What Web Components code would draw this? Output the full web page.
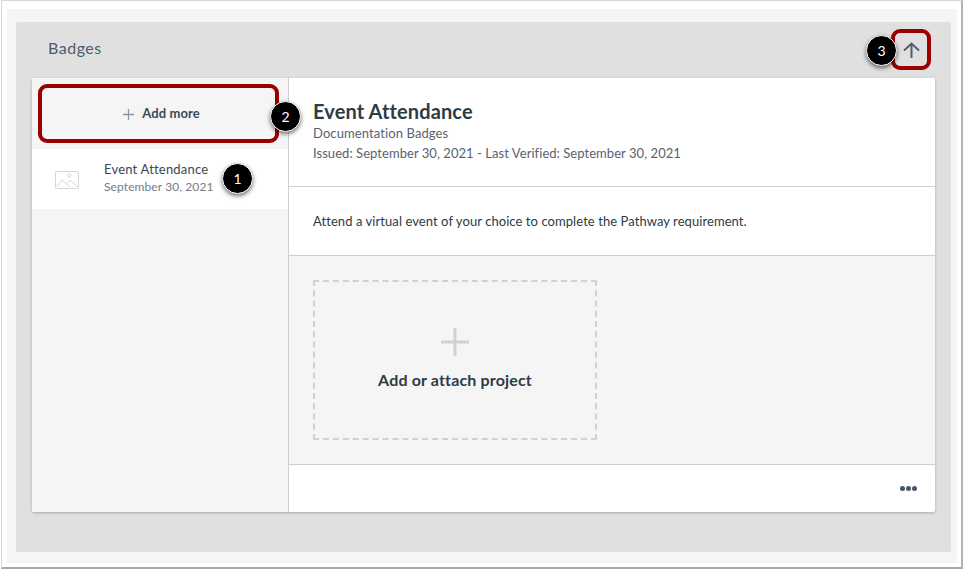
<!DOCTYPE html>
<html><head><meta charset="utf-8">
<style>
html,body{margin:0;padding:0;background:#fff;width:964px;height:571px;overflow:hidden}
body{font-family:"Lato","Liberation Sans",sans-serif}
</style></head><body>
<screenshot-frame>
  <badges-panel>
    <span slot="title">Badges</span>
    <badge-sidebar slot="side"></badge-sidebar>
    <badge-detail slot="main"></badge-detail>
  </badges-panel>
</screenshot-frame>
<script>
function def(name,html){customElements.define(name,class extends HTMLElement{
  constructor(){super();this.attachShadow({mode:'open'}).innerHTML=html}
})}
def('screenshot-frame',`<style>
:host{display:block;box-sizing:border-box;width:962px;height:569px;margin:0 0 0 1px;background:#fff;border:1px solid #d8d8d8;border-bottom:2px solid #a8a8a8;border-right:2px solid #b4b4b4;padding:8px 4px 4px 5px}
.in{box-sizing:border-box;height:100%;background:#f5f5f5;padding:13px 6px 11px 9px;display:flex}
</style><div class="in"><slot></slot></div>`);
def('call-out',`<style>
:host{position:absolute;width:31px;height:31px;border-radius:50%;background:#000;color:#fff;border:1px solid #fff;box-sizing:border-box;box-shadow:0 2px 4px rgba(0,0,0,.55);display:flex;align-items:center;justify-content:center;font:14px "Lato","Liberation Sans",sans-serif}
</style><slot></slot>`);
def('badges-panel',`<style>
:host{display:flex;flex-direction:column;flex:1;background:#e0e0e0;border-radius:2px;padding:0 16px 40px 16px;position:relative;min-width:0}
header{height:56px;display:flex;align-items:center;justify-content:space-between;padding:0 4px 0 16px;color:#4c5c6b;font-size:16px;letter-spacing:.5px;flex:none}
.t{margin-top:-5px}
.up{box-sizing:border-box;width:40px;height:41px;border:4px solid #990000;border-radius:9px;display:flex;align-items:center;justify-content:center;margin-top:-1px}
.card{flex:1;background:#fff;border-radius:2px;box-shadow:0 1px 3px rgba(0,0,0,.25);display:flex;min-height:0}
call-out{left:850px;top:13px}
</style>
<header><span class="t"><slot name="title"></slot></span><div class="up"><svg width="17" height="16" viewBox="0 0 17 16" fill="none" stroke="#4a5f73" stroke-width="2"><path d="M8.500 16V1.500M1 8.500l7.500-7 7.500 7"/></svg></div></header>
<div class="card"><slot name="side"></slot><slot name="main"></slot></div>
<call-out>3</call-out>`);
def('badge-sidebar',`<style>
:host{display:block;width:257px;box-sizing:border-box;flex:none;background:#f5f5f5;border-right:1px solid #c9d0d6;position:relative}
.addwrap{height:71px;box-sizing:border-box;padding:6px 9px 6px 6px}
.add{box-sizing:border-box;height:59px;border:4px solid #990000;border-radius:9px;display:flex;align-items:center;justify-content:center;gap:8px;font-size:13px;font-weight:700;letter-spacing:.1px;color:#3a4a58;background:#f5f5f5;padding-left:6px}
.add span{margin-top:-1px}
.item{height:60px;background:#fff;display:flex;align-items:center;padding-left:23px;box-sizing:border-box}
.item svg{margin-top:2px;flex:none}
.t{margin-left:25px;color:#3b4650;font-size:13px;line-height:17px;letter-spacing:.2px;margin-top:-3px}
.d{color:#757c83;font-size:12px;line-height:17px;letter-spacing:.1px}
</style>
<div class="addwrap"><div class="add"><svg width="11" height="11" viewBox="0 0 11 11" stroke="#8a97a3" stroke-width="1.3" style="margin-top:2px"><path d="M5.500 0v11M0 5.500h11"/></svg><span>Add more</span></div></div>
<div class="item"><svg width="24" height="19" viewBox="0 0 24 19" fill="none" stroke="#d5d7d9" stroke-width="1"><rect x=".5" y=".5" width="23" height="17" rx="1"/><circle cx="14.300" cy="4.500" r="1.700"/><path d="M1.500 16L7 9l8 7M12 12l4-2.500 7 6.500"/></svg>
<div class="t">Event Attendance<div class="d">September 30, 2021</div></div></div>
<call-out style="left:238px;top:23px">2</call-out>
<call-out style="left:190px;top:85px">1</call-out>`);
def('badge-detail',`<style>
:host{display:flex;flex-direction:column;flex:1;min-width:0;color:#3b4650}
.head{height:109px;box-sizing:border-box;padding:19px 24px 0;border-bottom:1px solid #c9d0d6}
h2{margin:1px 0 -1px;font-size:20px;line-height:26px;font-weight:700;letter-spacing:.12px;color:#2d3b45}
.s{font-size:13px;line-height:20px;letter-spacing:.05px;color:#57636e}
.s.a{letter-spacing:.1px}
.desc{height:69px;box-sizing:border-box;padding:0 24px 1px;border-bottom:1px solid #c9d0d6;display:flex;align-items:center;font-size:13px;letter-spacing:.07px;color:#2d3b45}
.proj{height:209px;box-sizing:border-box;background:#f5f5f5;border-bottom:1px solid #c9d0d6;padding:24px}
.drop{box-sizing:border-box;width:284px;height:160px;border:2px dashed #cdd2d6;border-radius:2px;display:flex;flex-direction:column;align-items:center;justify-content:center;gap:14px;font-size:16px;font-weight:700;letter-spacing:.15px;color:#2d3b45;padding-bottom:4px}
.foot{flex:1;display:flex;justify-content:flex-end;align-items:center;padding-right:18px;padding-bottom:1px}
.foot i{display:block;width:5px;height:5px;border-radius:50%;background:#46566a;margin-left:1px}
</style>
<div class="head"><h2>Event Attendance</h2><div class="s a">Documentation Badges</div><div class="s">Issued: September 30, 2021 - Last Verified: September 30, 2021</div></div>
<div class="desc">Attend a virtual event of your choice to complete the Pathway requirement.</div>
<div class="proj"><div class="drop"><svg width="28" height="28" viewBox="0 0 28 28" fill="#cdd2d6"><path d="M12.500 0h3v12.500H28v3H15.500V28h-3V15.500H0v-3h12.500z"/></svg><span>Add or attach project</span></div></div>
<div class="foot"><i></i><i></i><i></i></div>`);
</script>
</body></html>
